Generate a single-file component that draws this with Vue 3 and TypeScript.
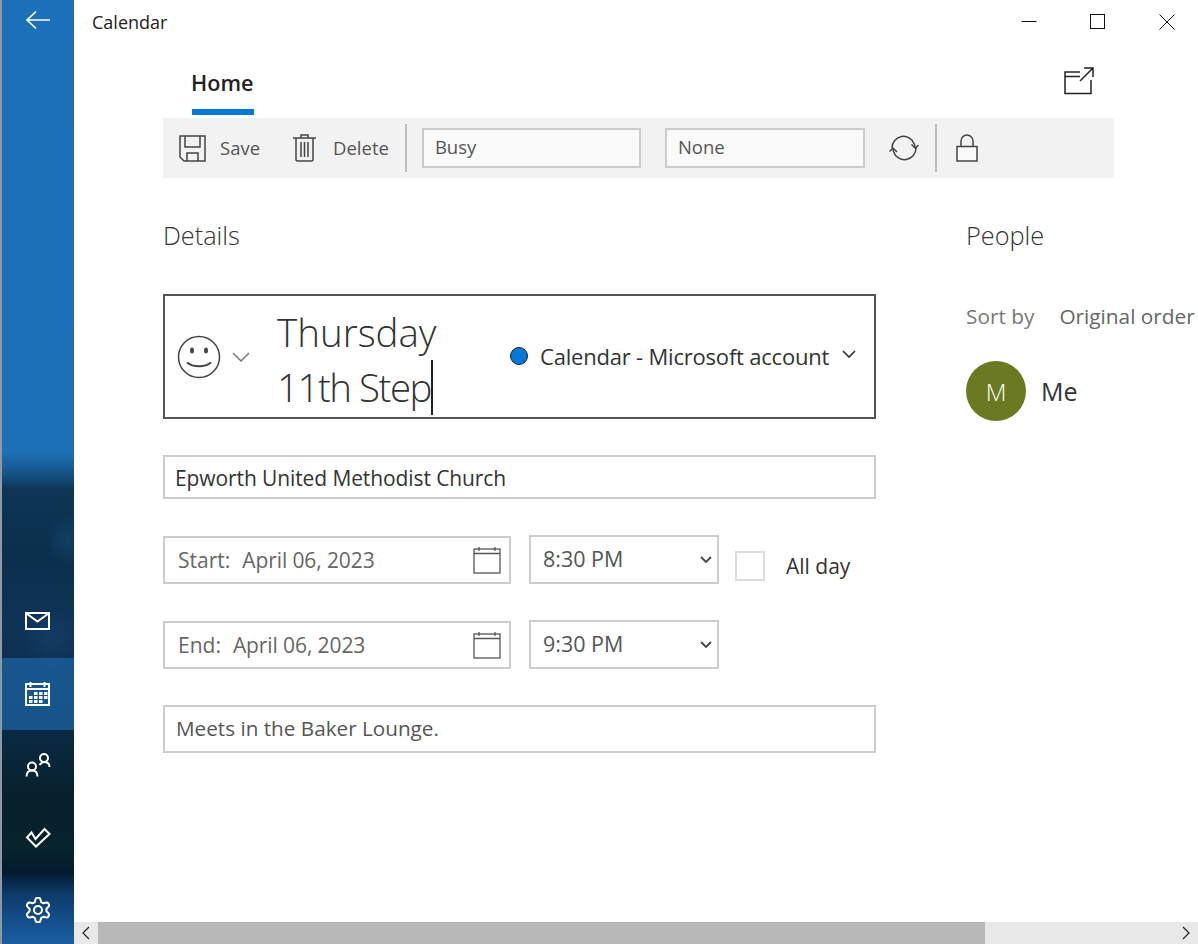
<script setup lang="ts">
const gridCells: [number, number][] = [
  [9, 11], [14, 11], [19, 11], [4, 15], [9, 15], [14, 15], [19, 15], [4, 19], [9, 19], [14, 19],
]
const dateRows = [
  { label: 'Start:', date: 'April 06, 2023', time: '8:30 PM', allDay: true },
  { label: 'End:', date: 'April 06, 2023', time: '9:30 PM', allDay: false },
]
const gearPath = Array.from({ length: 73 }, (_, i) => {
  const a = (i / 72) * Math.PI * 2
  const wave = Math.max(-1, Math.min(1, Math.cos(a * 6) * 1.5))
  const r = 10.3 + 1.9 * wave
  const x = 13 + r * Math.sin(a)
  const y = 13 - r * Math.cos(a)
  return `${i === 0 ? 'M' : 'L'}${x.toFixed(2)} ${y.toFixed(2)}`
}).join(' ')
</script>

<template>
  <div class="app">
    <aside class="sidebar">
      <button class="back" aria-label="Back">
        <svg width="26" height="20" viewBox="0 0 26 20"><path d="M25 10H2M11 1.500 2 10l9 8.500" fill="none" stroke="#fff" stroke-width="1.600" /></svg>
      </button>
      <nav class="nav">
        <div class="nav-item">
          <svg width="26" height="20" viewBox="0 0 26 20" fill="none" stroke="#fff" stroke-width="2"><rect x="1" y="1" width="23" height="16" /><path d="m1.500 1.500 11 8 11-8" /></svg>
        </div>
        <div class="nav-item active">
          <svg width="26" height="26" viewBox="0 0 26 26" fill="none" stroke="#fff" stroke-width="2">
            <rect x="1" y="3" width="23" height="21" />
            <path d="M1 8h23M5.500 1v5M19.500 1v5" />
            <rect v-for="c in gridCells" :key="c.join('-')" :x="c[0]" :y="c[1]" width="3.500" height="3" fill="#fff" stroke="none" />
          </svg>
        </div>
        <div class="nav-item">
          <svg width="26" height="26" viewBox="0 0 26 26" fill="none" stroke="#fff" stroke-width="2"><circle cx="7" cy="13.500" r="4" /><path d="M1.500 23.500c0-4 2.500-6 5.500-6s5.500 2 5.500 6" /><circle cx="19" cy="5" r="4" /><path d="M14.500 12c1.500-2 3-3 4.500-3 3 0 5.500 1.500 5.500 5" /></svg>
        </div>
        <div class="nav-item">
          <svg width="26" height="22" viewBox="0 0 26 22" fill="none" stroke="#fff" stroke-width="2"><path d="M6.500 5.500 2 10.500l9 9L24.500 7l-5-5L10.500 12z" /></svg>
        </div>
        <div class="nav-item">
          <svg width="26" height="26" viewBox="0 0 26 26" fill="none" stroke="#fff" stroke-width="2"><circle cx="13" cy="13" r="4" /><path :d="gearPath" stroke-linejoin="round" /></svg>
        </div>
      </nav>
    </aside>

    <main class="main">
      <header class="titlebar">
        <span class="app-title">Calendar</span>
        <div class="window-controls">
          <svg width="16" height="16" viewBox="0 0 16 16"><path d="M0.500 7.500h15" stroke="#111" fill="none" /></svg>
          <svg width="16" height="16" viewBox="0 0 16 16"><rect x="0.500" y="0.500" width="14" height="14" stroke="#111" fill="none" /></svg>
          <svg width="16" height="16" viewBox="0 0 16 16"><path d="m0.500 0.500 15 15M15.500 0.500l-15 15" stroke="#111" fill="none" /></svg>
        </div>
      </header>

      <div class="content">
        <div class="tabs">
          <div class="tab">Home</div>
          <svg class="popout" width="30" height="28" viewBox="0 0 30 28" fill="none" stroke="#222" stroke-width="1.500">
            <path d="M16 5H1v21.500h26V13M1 9.500h15" />
            <path d="M16 14 28.500 1.500M20 1h9v9" />
          </svg>
        </div>

        <div class="toolbar">
          <div class="tool save">
            <svg width="27" height="27" viewBox="0 0 27 27" fill="none" stroke="#444" stroke-width="1.500"><path d="M1 1h25v25H5l-4-4z" /><path d="M6 1v11h15V1M8 26v-8h11v8" /></svg>
            <span class="tool-label">Save</span>
          </div>
          <div class="tool delete">
            <svg width="23" height="28" viewBox="0 0 23 28" fill="none" stroke="#444" stroke-width="1.500"><path d="M0 4h23M8 4V1h7v3M3 4v22l1 1h15l1-1V4M8 8v15M11.500 8v15M15 8v15" /></svg>
            <span class="tool-label">Delete</span>
          </div>
          <div class="sep first-sep"></div>
          <div class="tb-field busy">Busy</div>
          <div class="tb-field none">None</div>
          <svg class="sync" width="30" height="26" viewBox="0 0 30 26" fill="none" stroke="#444" stroke-width="1.500"><path d="M3 13A11.500 11.500 0 0 1 25.500 9.500q.6 1.800.6 3.500M27 13a11.500 11.500 0 0 1-22.500 3.500Q4 14.800 4 13" /><path d="m22.500 9.500 4 4 3-3.500M.5 16.500l3.500-3.500 4 4" /></svg>
          <div class="sep second-sep"></div>
          <svg class="lock" width="22" height="28" viewBox="0 0 22 28" fill="none" stroke="#444" stroke-width="1.500"><path d="M5 12V7a6 6 0 0 1 12 0v5" /><rect x="1" y="12.500" width="20" height="14.500" fill="#fafafa" /></svg>
        </div>

        <div class="columns">
          <section class="details">
            <h2 class="heading">Details</h2>

            <div class="title-box">
              <svg class="smile" width="44" height="44" viewBox="0 0 44 44" fill="none" stroke="#444" stroke-width="1.500">
                <circle cx="22" cy="22" r="20.500" />
                <ellipse cx="15" cy="15.500" rx="2" ry="3" fill="#444" stroke="none" />
                <ellipse cx="29" cy="15.500" rx="2" ry="3" fill="#444" stroke="none" />
                <path d="M10 27.500c6 5 18 5 24 0" stroke-width="2" />
              </svg>
              <svg class="smile-chev" width="18" height="10" viewBox="0 0 18 10"><path d="m1 1 8 8 8-8" fill="none" stroke="#777" stroke-width="1.500" /></svg>
              <div class="title-text">Thursday<br /><span class="title-second">11th Step</span><span class="caret"></span></div>
              <div class="calendar-pick">
                <span class="dot"></span>
                <span class="cal-name">Calendar - Microsoft account</span>
                <svg width="14" height="8" viewBox="0 0 14 8"><path d="m1 1 6 6 6-6" fill="none" stroke="#333" stroke-width="1.700" /></svg>
              </div>
            </div>

            <div class="field location">Epworth United Methodist Church</div>

            <div v-for="row in dateRows" :key="row.label" class="date-row">
              <div class="field date">
                <span class="date-label">{{ row.label }}</span>
                <span class="date-value">{{ row.date }}</span>
                <svg class="cal-icon" width="28" height="28" viewBox="0 0 28 28" fill="none" stroke="#555" stroke-width="1.300"><rect x="1" y="3" width="26" height="24" /><path d="M1 7.500h26M6 1v4M22 1v4" /></svg>
              </div>
              <div class="field time">
                <span>{{ row.time }}</span>
                <svg width="12" height="8" viewBox="0 0 12 8"><path d="m1 1 5 5 5-5" fill="none" stroke="#444" stroke-width="1.800" /></svg>
              </div>
              <div v-if="row.allDay" class="allday">
                <span class="checkbox"></span>
                <span>All day</span>
              </div>
            </div>

            <div class="field description">Meets in the Baker Lounge.</div>
          </section>

          <section class="people">
            <h2 class="heading">People</h2>
            <div class="sort"><span class="sort-by">Sort by</span><span>Original order</span></div>
            <div class="person">
              <span class="avatar">M</span>
              <span class="person-name">Me</span>
            </div>
          </section>
        </div>
      </div>

      <div class="scrollbar">
        <div class="sb-btn">
          <svg width="10" height="14" viewBox="0 0 10 14"><path d="M8 1 2 7l6 6" fill="none" stroke="#222" stroke-width="1.200" /></svg>
        </div>
        <div class="sb-thumb"></div>
        <div class="sb-track"></div>
        <div class="sb-btn end">
          <svg width="10" height="14" viewBox="0 0 10 14"><path d="m2 1 6 6-6 6" fill="none" stroke="#222" stroke-width="1.200" /></svg>
        </div>
      </div>
    </main>
  </div>
</template>

<style>
html, body { margin: 0; background: #fff; }
</style>

<style scoped>
.app {
  display: grid;
  grid-template-columns: 74px 1fr;
  width: 1198px;
  height: 944px;
  overflow: hidden;
  font-family: "Open Sans", "Noto Sans", sans-serif;
  color: #333;
  background: #fff;
}
.sidebar {
  display: flex;
  flex-direction: column;
  justify-content: space-between;
  border-left: 2px solid #8d9aa5;
  background:
    radial-gradient(ellipse 22px 26px at 66px 540px, rgba(30, 90, 140, 0.35), transparent),
    radial-gradient(ellipse 30px 30px at 50px 640px, rgba(30, 80, 130, 0.3), transparent),
    linear-gradient(180deg,
    #1c70b9 0, #1c70b6 452px, #17598f 470px, #0d3555 490px, #0b2f4c 560px,
    #0f3458 625px, #0e3050 660px, #0a2a44 730px, #07202c 800px, #07232c 850px,
    #041b30 872px, #0e3d6e 896px, #1a5fa3 944px);
}
.back {
  height: 44px;
  padding: 0 0 4px;
  border: 0;
  background: none;
  display: flex;
  align-items: center;
  justify-content: center;
}
.nav { margin-bottom: -2px; }
.nav-item {
  height: 72px;
  display: flex;
  align-items: center;
  justify-content: center;
}
.nav-item.active { background: rgba(30, 110, 180, 0.62); }

.main {
  display: flex;
  flex-direction: column;
  min-width: 0;
}
.titlebar {
  height: 44px;
  flex: none;
  display: flex;
  align-items: center;
  justify-content: space-between;
  padding-left: 18px;
}
.app-title { font-size: 18px; color: #222; margin-top: -1px; }
.window-controls {
  display: flex;
  gap: 53px;
  padding-right: 23px;
}
.content {
  flex: 1;
  min-height: 0;
  padding-left: 89px;
  overflow: hidden;
}
.tabs {
  width: 931px;
  height: 74px;
  display: flex;
  align-items: flex-start;
  justify-content: space-between;
}
.tab {
  margin: 24px 0 0 29px;
  width: 62px;
  height: 41px;
  border-bottom: 6px solid #0078d7;
  font-size: 21.600px;
  line-height: 30px;
  font-weight: 600;
  color: #222;
  white-space: nowrap;
  text-indent: -1px;
}
.popout { margin-top: 23px; }
.toolbar {
  width: 951px;
  height: 60px;
  background: #f2f2f2;
  display: flex;
  align-items: center;
  font-size: 18.500px;
  color: #555;
}
.tool {
  display: flex;
  align-items: center;
}
.tool-label { margin-top: -2px; }
.save { margin-left: 16px; gap: 14px; }
.delete { margin-left: 33px; gap: 17px; }
.sep {
  width: 2px;
  height: 48px;
  background: #bbb;
}
.first-sep { margin-left: 16px; }
.second-sep { margin-left: 16px; }
.tb-field {
  box-sizing: border-box;
  height: 40px;
  border: 2px solid #ccc;
  background: #fafafa;
  padding-left: 11px;
  line-height: 34px;
}
.busy { width: 219px; margin-left: 15px; }
.none { width: 200px; margin-left: 24px; }
.sync { margin-left: 24px; }
.lock { margin-left: 19px; }

.columns {
  display: flex;
  gap: 90px;
}
.details {
  width: 713px;
  flex: none;
}
.heading {
  margin: 41px 0 43px;
  font-size: 25.300px;
  line-height: 32px;
  font-weight: 300;
  color: #333;
}
.title-box {
  box-sizing: border-box;
  height: 125px;
  border: 2px solid #555;
  display: flex;
  align-items: center;
  position: relative;
}
.smile { margin-left: 12px; }
.smile-chev { margin-left: 11px; }
.title-text {
  margin: 6px 0 0 27px;
  width: 233px;
  font-size: 38.500px;
  line-height: 55px;
  font-weight: 300;
  color: #333;
  white-space: nowrap;
}
.title-second { letter-spacing: -1.500px; }
.caret {
  display: inline-block;
  width: 2px;
  height: 55px;
  margin-left: 0;
  background: #222;
  vertical-align: -13px;
}
.calendar-pick {
  display: flex;
  align-items: center;
  font-size: 22px;
  color: #333;
  white-space: nowrap;
  margin-bottom: 2px;
}
.calendar-pick svg { margin: -4px 0 0 13px; }
.dot {
  box-sizing: border-box;
  width: 18px;
  height: 18px;
  border-radius: 50%;
  background: #0078d7;
  border: 1.500px solid #222;
  margin-right: 12px;
}
.cal-name { letter-spacing: -0.200px; }
.field {
  box-sizing: border-box;
  border: 2px solid #ccc;
  background: #fff;
  font-size: 21px;
  display: flex;
  align-items: center;
}
.location {
  height: 44px;
  margin-top: 36px;
  padding: 2px 0 0 10px;
  color: #333;
  letter-spacing: -0.100px;
}
.date-row {
  display: flex;
  align-items: flex-start;
  margin-top: 37px;
  height: 48px;
}
.date {
  width: 348px;
  height: 48px;
  padding: 0 0 0 13px;
  color: #666;
  position: relative;
}
.date-label { margin-right: 12px; }
.date-value { letter-spacing: -0.100px; }
.cal-icon {
  position: absolute;
  right: 8px;
  top: 8px;
}
.time {
  width: 190px;
  height: 49px;
  margin: -1px 0 0 18px;
  padding: 0 5px 2px 12px;
  justify-content: space-between;
  color: #555;
  font-size: 21.500px;
}
.time svg { margin-top: 2px; }
.allday {
  display: flex;
  align-items: center;
  gap: 21px;
  margin: 15px 0 0 16px;
  font-size: 21px;
  color: #333;
}
.checkbox {
  box-sizing: border-box;
  width: 30px;
  height: 30px;
  border: 2px solid #ddd;
}
.description {
  height: 48px;
  margin-top: 36px;
  padding: 0 0 2px 11px;
  color: #555;
  font-size: 20.700px;
}
.people { flex: none; width: 232px; }
.sort {
  margin-top: 49px;
  display: flex;
  gap: 25px;
  font-size: 20.800px;
  line-height: 32px;
  color: #666;
  white-space: nowrap;
}
.sort-by { color: #777; }
.person {
  display: flex;
  align-items: center;
  gap: 15px;
  margin-top: 29px;
}
.avatar {
  width: 60px;
  height: 60px;
  border-radius: 50%;
  background: #6b7a22;
  color: #fff;
  font-size: 24px;
  font-weight: 300;
  display: flex;
  align-items: center;
  justify-content: center;
}
.person-name { font-size: 25px; color: #333; }
.scrollbar {
  flex: none;
  height: 22px;
  display: flex;
  background: #e8e8e8;
}
.sb-btn {
  width: 24px;
  display: flex;
  align-items: center;
  justify-content: center;
  flex: none;
}
.sb-thumb { width: 887px; background: #b8b8b8; flex: none; }
.sb-track { flex: 1; }
</style>
